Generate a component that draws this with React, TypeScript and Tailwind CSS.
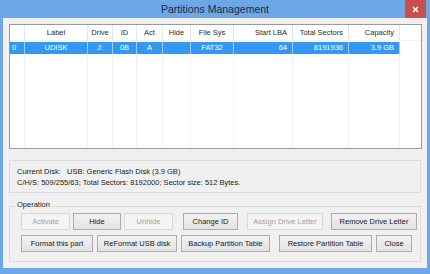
import React from "react";

const cols = [
  { key: "no", title: "", w: 15, align: "left" },
  { key: "label", title: "Label", w: 63, align: "center" },
  { key: "drive", title: "Drive", w: 25, align: "center" },
  { key: "id", title: "ID", w: 24, align: "center" },
  { key: "act", title: "Act", w: 26, align: "center" },
  { key: "hide", title: "Hide", w: 28, align: "center" },
  { key: "fs", title: "File Sys", w: 43, align: "center" },
  { key: "lba", title: "Start LBA", w: 59, align: "right" },
  { key: "total", title: "Total Sectors", w: 56, align: "right" },
  { key: "cap", title: "Capacity", w: 51, align: "right" },
];

const row: Record<string, string> = {
  no: "0",
  label: "UDISK",
  drive: "J:",
  id: "0B",
  act: "A",
  hide: "",
  fs: "FAT32",
  lba: "64",
  total: "8191936",
  cap: "3.9 GB",
};

const alignClass = (a: string) =>
  a === "right" ? "justify-end pr-[5px]" : a === "left" ? "justify-start pl-[2px]" : "justify-center";

function Btn({ label, w, disabled }: { label: string; w: number; disabled?: boolean }) {
  return (
    <div
      style={{ width: w }}
      className={
        "h-[17px] flex items-center justify-center border text-[7.5px] " +
        (disabled
          ? "border-[#d9d9d9] bg-[#f4f4f4] text-[#a3a3a3]"
          : "border-[#acacac] bg-gradient-to-b from-[#f2f2f2] to-[#e3e3e3] text-[#1a1a1a]")
      }
    >
      {label}
    </div>
  );
}

export default function App() {
  return (
    <div
      className="w-[430px] h-[274px] bg-[#6ea7e6] flex flex-col overflow-hidden"
      style={{ fontFamily: '"Liberation Sans", Arial, sans-serif' }}
    >
      {/* title bar */}
      <div className="relative h-[18px] flex items-center justify-center">
        <span className="text-[10.5px] text-[#1d2c44] leading-none pt-[1px]">Partitions Management</span>
        <div className="absolute right-[4px] top-0 w-[21px] h-[18px] bg-[#c7504f] flex items-center justify-center">
          <svg width="7" height="7" viewBox="0 0 7 7">
            <path d="M1 1 L6 6 M6 1 L1 6" stroke="#ffffff" strokeWidth="1.6" />
          </svg>
        </div>
      </div>

      {/* client */}
      <div className="mx-[3px] mb-[6px] flex-1 bg-[#f0f0f0] pl-[6px] pr-[5px] pt-[6px] flex flex-col">
        {/* list view */}
        <div className="h-[125px] border border-[#9a9a9a] bg-white relative overflow-hidden">
          {/* gridlines */}
          <div className="absolute inset-0 flex pointer-events-none">
            {cols.map((c) => (
              <div key={c.key} style={{ width: c.w }} className="h-full border-r border-[#f0f0f0] shrink-0" />
            ))}
          </div>
          <div className="relative flex h-[16px] border-b border-[#f3f3f3]">
            {cols.map((c) => (
              <div
                key={c.key}
                style={{ width: c.w }}
                className={"shrink-0 flex items-center text-[7.5px] text-[#2a2a2a] border-r border-[#e5e5e5] " + alignClass(c.align)}
              >
                {c.title}
              </div>
            ))}
          </div>
          <div className="relative flex h-[12px] mt-[1px]">
            {cols.map((c) => (
              <div
                key={c.key}
                style={{ width: c.w }}
                className={"shrink-0 flex items-center text-[7.5px] text-white bg-[#3399f0] border-r border-[#9fcaf4] " + alignClass(c.align)}
              >
                {row[c.key]}
              </div>
            ))}
          </div>
        </div>

        {/* current disk */}
        <div className="mt-[11px] h-[33px] mr-[1px] border border-[#dcdcdc] flex flex-col justify-center pl-[7px] text-[7.5px] text-[#1a1a1a] leading-[11px]">
          <div>
            Current Disk:&nbsp;&nbsp;&nbsp;USB: Generic Flash Disk (3.9 GB)
          </div>
          <div>C/H/S: 509/255/63; Total Sectors: 8192000; Sector size: 512 Bytes.</div>
        </div>

        {/* operation */}
        <div className="mt-[13px] relative h-[56px] mr-[1px] border border-[#dcdcdc] pl-[11px] pt-[6px] flex flex-col gap-[5px]">
          <span className="absolute -top-[6px] left-[5px] px-[2px] bg-[#f0f0f0] text-[7.5px] text-[#1a1a1a] leading-none">
            Operation
          </span>
          <div className="flex gap-[3px]">
            <Btn label="Activate" w={49} disabled />
            <Btn label="Hide" w={48} />
            <Btn label="Unhide" w={49} disabled />
            <div className="w-[4px]" />
            <Btn label="Change ID" w={55} />
            <div className="w-[3px]" />
            <Btn label="Assign Drive Letter" w={76} disabled />
            <div className="w-[2px]" />
            <Btn label="Remove Drive Letter" w={86} />
          </div>
          <div className="flex gap-[4px]">
            <Btn label="Format this part" w={72} />
            <Btn label="ReFormat USB disk" w={80} />
            <Btn label="Backup Partition Table" w={89} />
            <div className="w-[1px]" />
            <Btn label="Restore Partition Table" w={93} />
            <Btn label="Close" w={36} />
          </div>
        </div>
      </div>
    </div>
  );
}
